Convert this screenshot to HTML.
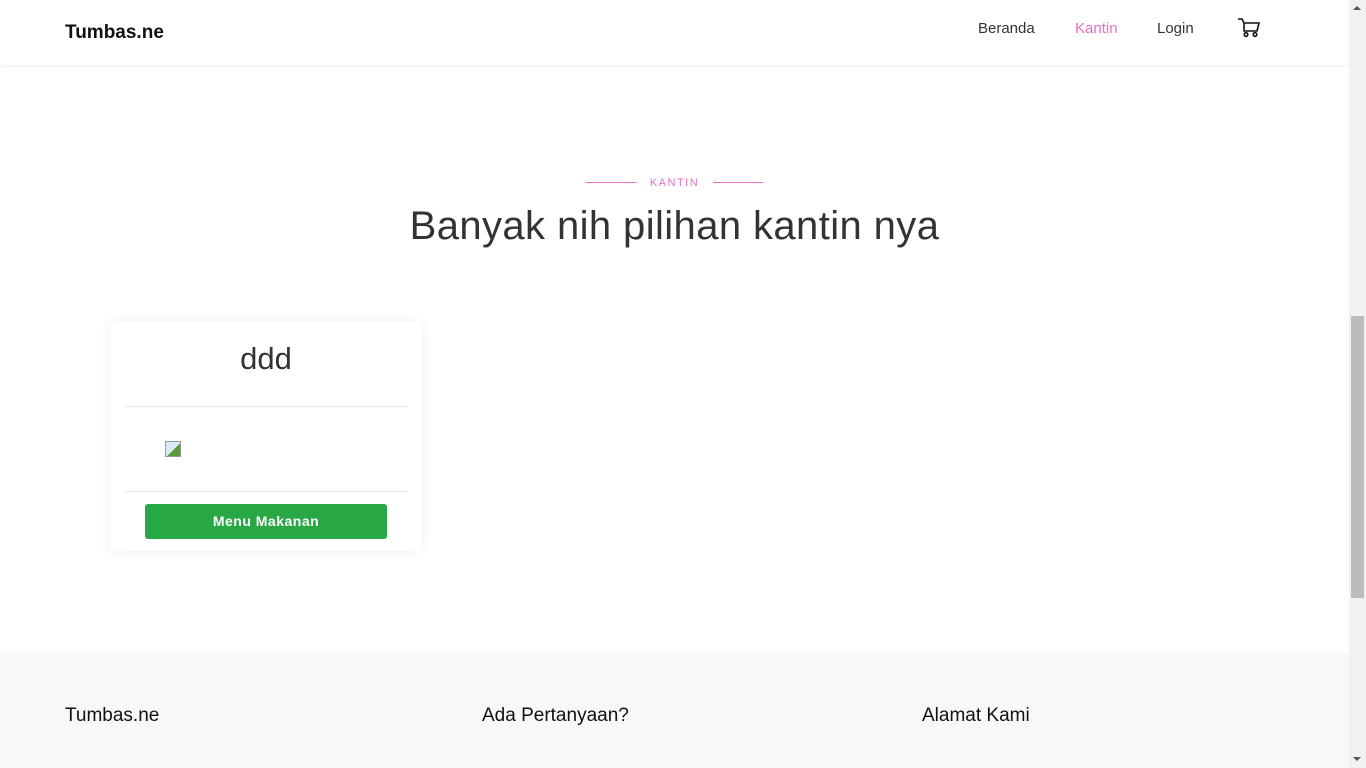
<!DOCTYPE html>
<html><head><meta charset="utf-8"><style>
*{margin:0;padding:0;box-sizing:border-box}
body{width:1366px;height:768px;overflow:hidden;background:#fff;font-family:"Liberation Sans",sans-serif;color:#333;position:relative}
.nav{position:absolute;left:0;top:0;width:1349px;height:65px;background:#fff;box-shadow:0 1px 4px rgba(0,0,0,.08)}
.brand{position:absolute;left:65px;top:22px;font-size:19px;font-weight:bold;color:#111}
.nav a{position:absolute;top:20px;font-size:15px;color:#333;text-decoration:none}
.sb{position:absolute;right:0;top:0;width:17px;height:768px;background:#f1f1f1}
.thumb{position:absolute;left:2px;top:316px;width:13px;height:282px;background:#bcbcbc}
.kicker{position:absolute;top:177px;left:0;width:1349px;text-align:center;font-size:11px;letter-spacing:1.5px;color:#e86ec8}
.line{position:absolute;top:182px;height:1px;width:50px;background:#e86ec8}
h1{position:absolute;top:204px;left:0;width:1349px;text-align:center;font-size:40px;letter-spacing:.4px;font-weight:normal;color:#333}
.card{position:absolute;left:110px;top:322px;width:312px;height:229px;background:#fff;border-radius:5px;box-shadow:0 0 12px rgba(0,0,0,.07)}
.card .t{position:absolute;top:19px;width:100%;text-align:center;font-size:31px;color:#333}
.hr{position:absolute;left:15px;width:282px;height:1px;background:#e6e6e6}
.btn{position:absolute;left:35px;top:182px;width:242px;height:35px;background:#28a745;border-radius:3px;color:#fff;font-size:14px;font-weight:bold;text-align:center;line-height:35px;letter-spacing:.5px}
.img{position:absolute;left:55px;top:119px;width:16px;height:16px;border:1px solid #999;background:linear-gradient(135deg,#dbe8f8 55%,#5a9c3a 55%)}
.foot{position:absolute;left:0;top:652px;width:1349px;height:116px;background:#f8f8f8}
.foot div{position:absolute;top:53px;font-size:19px;color:#111}
</style></head><body>
<div class="nav"><div class="brand">Tumbas.ne</div>
<a style="left:978px">Beranda</a><a style="left:1075px;color:#e86ec8">Kantin</a><a style="left:1157px">Login</a>
<svg style="position:absolute;left:1238px;top:18px" width="23" height="20" viewBox="0 0 23 20" fill="none" stroke="#111" stroke-width="1.6"><path d="M0 1h4l2 4v8h13l2-8H6"/><circle cx="8" cy="16.5" r="1.8"/><circle cx="17" cy="16.5" r="1.8"/></svg>
</div>
<div class="kicker">KANTIN</div>
<div class="line" style="left:586px"></div><div class="line" style="left:713px"></div>
<h1>Banyak nih pilihan kantin nya</h1>
<div class="card"><div class="t">ddd</div><div class="hr" style="top:84px"></div><div class="img"></div><div class="hr" style="top:169px"></div><div class="btn">Menu Makanan</div></div>
<div class="foot"><div style="left:65px">Tumbas.ne</div><div style="left:482px">Ada Pertanyaan?</div><div style="left:922px">Alamat Kami</div></div>
<div class="sb"><div class="thumb"></div>
<div style="position:absolute;left:4px;top:6px;border:4px solid transparent;border-bottom:4px solid #555;border-top:0"></div>
<div style="position:absolute;left:4px;top:757px;border:4px solid transparent;border-top:4px solid #555;border-bottom:0"></div></div>
</body></html>
